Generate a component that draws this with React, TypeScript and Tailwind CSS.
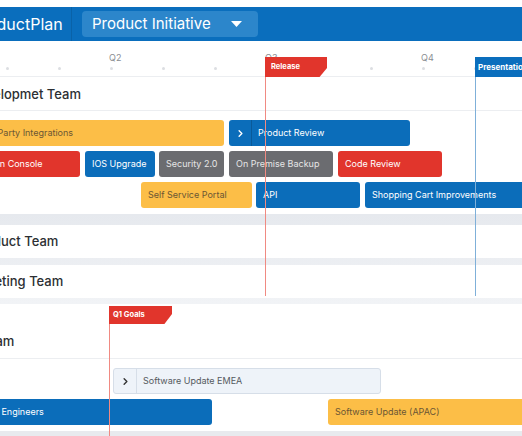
import React from "react";
import { ChevronRight } from "lucide-react";

type Bar = { l: number; r: number; c: "y" | "b" | "r" | "g" | "l"; t: string; chev?: boolean };

const colorCls: Record<Bar["c"], string> = {
  y: "bg-[#fcbe47] text-[#6b5634]",
  b: "bg-[#0b6dba] text-white",
  r: "bg-[#e1352c] text-white",
  g: "bg-[#6b6c70] text-[#e6e6e6]",
  l: "bg-[#eef3f9] text-[#555a60] border border-[#d6dee8]",
};

function BarRow({ bars }: { bars: Bar[] }) {
  let prev = 0;
  return (
    <div className="flex h-[26px] shrink-0">
      {bars.map((b, i) => {
        const ml = b.l - prev;
        prev = b.r;
        return (
          <div
            key={i}
            className={`flex h-full shrink-0 items-center overflow-hidden whitespace-nowrap rounded-[3px] text-[9px] ${colorCls[b.c]}`}
            style={{ marginLeft: ml, width: b.r - b.l }}
          >
            {b.chev && (
              <div
                className={`flex h-full w-[23px] shrink-0 items-center justify-center border-r ${
                  b.c === "l" ? "border-[#d6dee8] text-[#333]" : "border-[#0a5a99] text-white"
                }`}
              >
                <ChevronRight size={11} strokeWidth={3} />
              </div>
            )}
            <span className={b.chev ? "pl-[6px]" : "pl-[7px]"}>{b.t}</span>
          </div>
        );
      })}
    </div>
  );
}

function TeamHeader({
  name,
  shift,
  border = true,
  tall = false,
}: {
  name: string;
  shift: number;
  border?: boolean;
  tall?: boolean;
}) {
  return (
    <div
      className={`flex items-center overflow-hidden whitespace-nowrap ${tall ? "h-[34px] pt-[3px]" : "h-[33px]"} ${
        border ? "border-b border-[#eceef1]" : ""
      }`}
    >
      <span className="text-[13px] font-medium text-[#2c2f33]" style={{ marginLeft: shift }}>
        {name}
      </span>
    </div>
  );
}

export default function App() {
  const dots = Array.from({ length: 11 }, (_, i) => i);
  const qLabels: Record<number, string> = { 2: "Q2", 5: "Q3", 8: "Q4" };

  return (
    <div className="relative h-[436px] w-[522px] overflow-hidden bg-white font-['Inter',sans-serif]">
      <div className="h-[7px] bg-white" />
      {/* Header */}
      <header className="flex h-[34px] items-center bg-[#0a6ebd]">
        <div className="flex h-full w-[72px] shrink-0 items-center overflow-hidden whitespace-nowrap border-r border-[#0962a8]">
          <span className="ml-[-29px] text-[16px] text-white">ProductPlan</span>
        </div>
        <div className="ml-[10px] flex h-[26px] w-[176px] items-center justify-between rounded-[4px] bg-[#2c86cb] pl-[10px] pr-[16px]">
          <span className="text-[15px] text-white">Product Initiative</span>
          <svg width="11" height="6" viewBox="0 0 11 6">
            <path d="M0 0 H11 L5.5 6 Z" fill="white" />
          </svg>
        </div>
      </header>

      {/* Timeline header */}
      <div className="flex h-[36px] items-start overflow-hidden border-b border-[#eceef1]">
        <div className="ml-[-19px] flex">
          {dots.map((d) => (
            <div key={d} className="flex h-[36px] w-[52px] shrink-0 flex-col">
              <div className="h-[22px] pl-[24px] pt-[11px] text-[9px] leading-[11px] text-[#8a8d92]">
                {qLabels[d] ?? ""}
              </div>
              <div className="mt-[4px] flex justify-center">
                <div className="h-[3px] w-[3px] rounded-full bg-[#dcdee2]" />
              </div>
            </div>
          ))}
        </div>
      </div>

      {/* Dev section */}
      <TeamHeader name="Developmet Team" shift={-31} tall />
      <div className="flex flex-col gap-[5px] pb-[6px] pt-[9px]">
        <BarRow
          bars={[
            { l: -34, r: 224, c: "y", t: "Third Party Integrations" },
            { l: 229, r: 410, c: "b", t: "Product Review", chev: true },
          ]}
        />
        <BarRow
          bars={[
            { l: -29, r: 80, c: "r", t: "Admin Console" },
            { l: 85, r: 155, c: "b", t: "IOS Upgrade" },
            { l: 159, r: 224, c: "g", t: "Security 2.0" },
            { l: 229, r: 333, c: "g", t: "On Premise Backup" },
            { l: 338, r: 442, c: "r", t: "Code Review" },
          ]}
        />
        <BarRow
          bars={[
            { l: 141, r: 252, c: "y", t: "Self Service Portal" },
            { l: 256, r: 360, c: "b", t: "API" },
            { l: 365, r: 540, c: "b", t: "Shopping Cart Improvements" },
          ]}
        />
      </div>

      {/* Collapsed teams */}
      <div className="flex flex-col gap-[7px] bg-gradient-to-b from-[#e6e9ee] to-[#f1f3f6] pb-[6px] pt-[11px]">
        <div className="bg-white">
          <TeamHeader name="Product Team" shift={-28} border={false} />
        </div>
        <div className="bg-white">
          <TeamHeader name="Marketing Team" shift={-37} border={false} />
        </div>
      </div>

      {/* Sales section */}
      <div className="h-[22px]" />
      <TeamHeader name="Sales Team" shift={-57} />
      <div className="flex flex-col gap-[5px] pt-[9px]">
        <BarRow bars={[{ l: 113, r: 381, c: "l", t: "Software Update EMEA", chev: true }]} />
        <BarRow
          bars={[
            { l: -51, r: 212, c: "b", t: "Hire Sales Engineers" },
            { l: 328, r: 540, c: "y", t: "Software Update (APAC)" },
          ]}
        />
      </div>
      <div className="mt-[6px] h-[10px] bg-[#e8eaee]" />

      {/* Milestone overlays */}
      <div className="absolute left-[265px] top-[57px] h-[239px] w-px bg-[#f08a82]" />
      <div className="absolute left-[265px] top-[57px] flex h-[20px] w-[62px] items-center bg-[#e1352c] pl-[6px] text-[7.5px] font-bold text-white [clip-path:polygon(0_0,100%_0,100%_55%,88%_100%,0_100%)]">
        Release
      </div>
      <div className="absolute left-[475px] top-[57px] h-[239px] w-px bg-[#7fb0d9]" />
      <div className="absolute left-[475px] top-[57px] flex h-[20px] w-[60px] items-center bg-[#0a6ebd] pl-[3px] text-[8px] font-bold text-white">
        Presentation
      </div>
      <div className="absolute left-[109px] top-[306px] h-[130px] w-px bg-[#f08a82]" />
      <div className="absolute left-[109px] top-[306px] flex h-[18px] w-[63px] items-center bg-[#e1352c] pl-[4px] text-[7.5px] font-bold text-white [clip-path:polygon(0_0,100%_0,100%_45%,88%_100%,0_100%)]">
        Q1 Goals
      </div>
    </div>
  );
}
